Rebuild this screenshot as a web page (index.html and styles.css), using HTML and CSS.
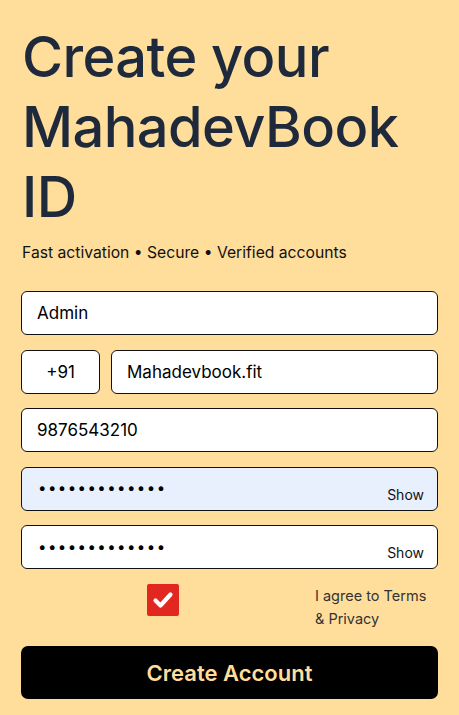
FILE: index.html
```html
<!DOCTYPE html>
<html lang="en">
<head>
<meta charset="utf-8">
<title>Create your MahadevBook ID</title>
<link rel="stylesheet" href="styles.css">
</head>
<body>
<main class="page">
  <h1 class="title">Create your MahadevBook ID</h1>
  <p class="tagline">Fast activation • Secure • Verified accounts</p>
  <form class="form">
    <div class="field"><span class="value">Admin</span></div>
    <div class="row">
      <div class="field code"><span class="value">+91</span></div>
      <div class="field grow"><span class="value">Mahadevbook.fit</span></div>
    </div>
    <div class="field"><span class="value">9876543210</span></div>
    <div class="field pass autofill"><span class="dots">•••••••••••••</span><span class="show">Show</span></div>
    <div class="field pass"><span class="dots">•••••••••••••</span><span class="show">Show</span></div>
    <div class="agree">
      <span class="check-cell">
        <span class="checkbox">
          <svg viewBox="0 0 32 32" width="32" height="32"><path d="M8.5 16.5 L13.5 21.5 L23.5 10.5" fill="none" stroke="#fff" stroke-width="4.2" stroke-linecap="round" stroke-linejoin="round"/></svg>
        </span>
      </span>
      <span class="agree-text">I agree to Terms &amp; Privacy</span>
    </div>
    <button type="button" class="submit">Create Account</button>
  </form>
</main>
</body>
</html>
```
FILE: styles.css
```css
html, body {
  margin: 0;
  padding: 0;
  background: #ffde9c;
}
body {
  font-family: "Inter", "Liberation Sans", sans-serif;
  color: #000;
}
.page {
  padding: 22px 21px 16px 21px;
}
.title {
  margin: 0;
  font-family: "Inter", sans-serif;
  font-weight: 500;
  font-size: 56px;
  line-height: 70px;
  letter-spacing: -0.6px;
  color: #1e293b;
  padding-left: 1px;
}
.tagline {
  margin: 11px 0 0 1px;
  font-size: 15.7px;
  line-height: 20px;
  color: #111;
}
.form {
  margin-top: 28px;
  display: flex;
  flex-direction: column;
  gap: 14.5px;
}
.field {
  box-sizing: border-box;
  height: 44px;
  background: #fff;
  border: 1px solid #111;
  border-radius: 6px;
  display: flex;
  align-items: center;
  padding: 0 15px;
  font-size: 17px;
  color: #000;
}
.row {
  display: flex;
  gap: 11px;
}
.code {
  width: 79px;
  flex: none;
  justify-content: center;
  padding: 0;
}
.grow {
  flex: 1;
}
.pass {
  position: relative;
  padding-left: 16px;
}
.autofill {
  background: #e8f0fe;
}
.dots {
  font-size: 15px;
  letter-spacing: 1.45px;
  margin-top: -2px;
}
.show {
  position: absolute;
  right: 13px;
  bottom: 7px;
  font-size: 14px;
  color: #111;
}
.agree {
  display: grid;
  grid-template-columns: 1fr 123px;
  column-gap: 10px;
}
.check-cell {
  display: flex;
  justify-content: center;
}
.checkbox {
  width: 32px;
  height: 32px;
  background: #e1271f;
  border-radius: 2px;
  display: flex;
}
.agree-text {
  max-width: 114px;
  font-size: 14.5px;
  line-height: 23px;
  color: #333;
}
.submit {
  margin-top: 2px;
  height: 53px;
  background: #000;
  border: none;
  border-radius: 7px;
  color: #ffde9c;
  font-family: "Inter", sans-serif;
  font-weight: 600;
  font-size: 22px;
  cursor: pointer;
}
```
